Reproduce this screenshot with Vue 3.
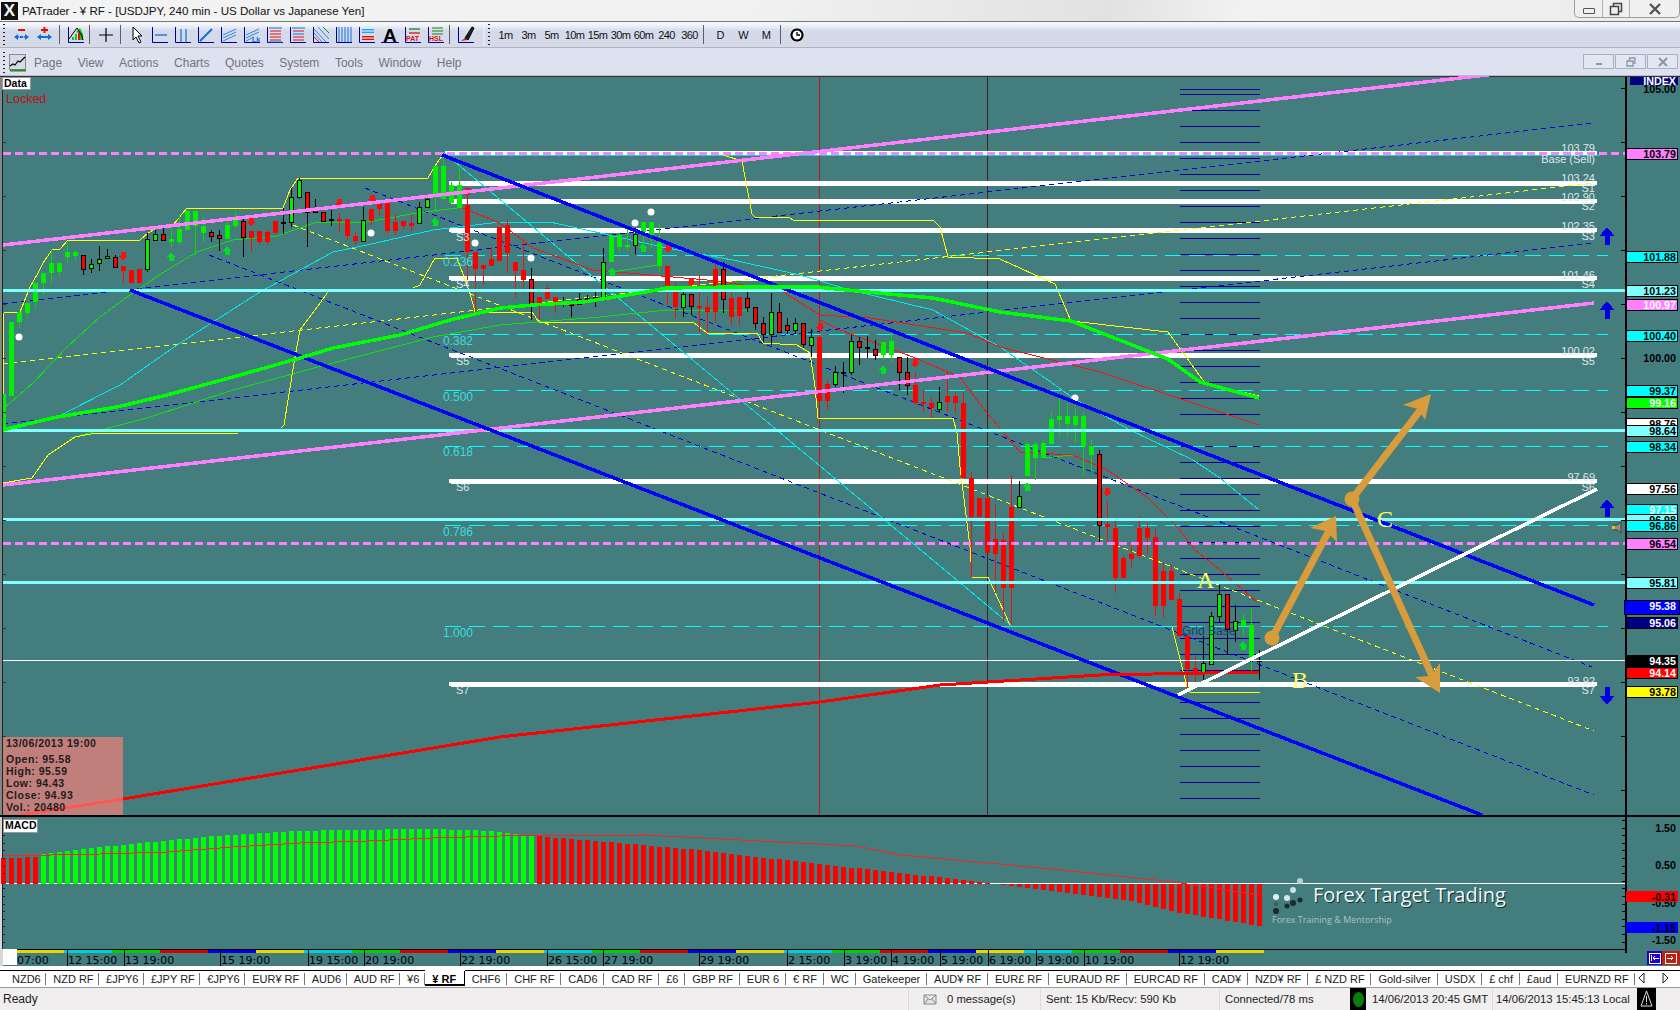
<template>
  <div class="app">
    <div class="titlebar">
      <span class="logo">X</span>
      <span class="title">PATrader - ¥ RF - [USDJPY, 240 min - US Dollar vs Japanese Yen]</span>
      <div class="winbtns">
        <button class="wb wb-min"><i class="min-glyph"></i></button>
        <button class="wb wb-res">
          <svg width="14" height="14" viewBox="0 0 14 14"><path d="M1.5 4.5h8v8h-8zM4.5 4.5v-3h8v8h-3" fill="none" stroke="#444" stroke-width="1.5" /></svg>
        </button>
        <button class="wb wb-close">
          <svg width="14" height="12" viewBox="0 0 14 12"><path d="M2 1l10 10M12 1L2 11" stroke="#555" stroke-width="2.4" /></svg>
        </button>
      </div>
    </div>

    <div class="toolbar">
      <i class="grip"></i>
      <template v-for="(t, i) in tools" :key="i">
        <i v-if="t.sep" class="sep"></i>
        <i v-else-if="t.grip" class="grip grip-mid"></i>
        <span v-else-if="t.text" class="tf">{{ t.text }}</span>
        <span v-else class="tool">
          <svg width="20" height="20" viewBox="0 0 20 20">
            <path v-if="t.frame" d="M2.5 2v15.5H18" fill="none" stroke="#000090" />
            <path v-for="(p, j) in t.paths" :key="j" :d="p[0]" :stroke="p[1] || 'none'" :fill="p[2] || 'none'" :stroke-width="p[3] || 1" />
            <text v-if="t.label" :x="t.lx" :y="t.ly" :fill="t.lc" :font-size="t.ls" :font-weight="t.lw" class="tool-label">{{ t.label }}</text>
          </svg>
        </span>
      </template>
    </div>

    <div class="menubar">
      <i class="grip"></i>
      <svg class="menu-icon" width="18" height="18" viewBox="0 0 18 18">
        <rect x="0.5" y="0.5" width="16" height="15" fill="#d8dbe6" stroke="#8a8a8a" />
        <path d="M1 16.5h16" stroke="#2a8a2a" stroke-width="2" />
        <path d="M1 12l3-2 2 1 3-4 2 1 5-5" fill="none" stroke="#000" stroke-width="1.2" />
      </svg>
      <span v-for="m in menus" :key="m" class="menu-item">{{ m }}</span>
      <div class="childbtns">
        <button class="cb"><i class="cb-min"></i></button>
        <button class="cb">
          <svg width="10" height="10" viewBox="0 0 10 10"><path d="M1 4h6v5H1zM3.500 4V1h5.500v5H7" fill="none" stroke="#8a96a8" stroke-width="1.300" /></svg>
        </button>
        <button class="cb">
          <svg width="10" height="10" viewBox="0 0 10 10"><path d="M1 1l8 8M9 1L1 9" stroke="#8a96a8" stroke-width="2" /></svg>
        </button>
      </div>
    </div>

    <!-- main price pane, drawn in page coordinates -->
    <svg class="pane" width="1680" height="741" viewBox="0 76 1680 741" shape-rendering="crispEdges">
      <rect x="0" y="76" width="1680" height="741" fill="#437d7d" />
      <rect x="0" y="76" width="2" height="741" fill="#7d8a8a" />
      <path d="M0 76.500H1680" stroke="#333" />

      <line x1="819.500" y1="77" x2="819.500" y2="815" stroke="#c01818" />
      <line x1="987.500" y1="77" x2="987.500" y2="815" stroke="#4a1c1c" />

      <!-- grid block -->
      <line v-for="g in gridYs" :key="g" x1="1180" :y1="g" x2="1260" :y2="g" stroke="#000090" />

      <line v-for="y in whiteYs" :key="y" x1="451" :y1="y" x2="1595" :y2="y" stroke="#fff" stroke-width="5" stroke-linecap="round" />
      <line x1="445" y1="155.500" x2="1600" y2="155.500" stroke="#00e0e0" />
      <line x1="445" y1="153" x2="1597" y2="153" stroke="#fff" stroke-width="4" />
      <line v-for="y in fibYs" :key="y" x1="445" :y1="y" x2="1608" :y2="y" stroke="#00ffff" stroke-dasharray="16 8" />

      <polyline v-for="(l, i) in thinLines" :key="'t' + i" :points="l.p" fill="none" :stroke="l.c" :stroke-width="l.w || 1" :stroke-dasharray="l.d" />

      <!-- candles -->
      <rect x="3" y="394" width="3" height="36" fill="#00f000" />
      <g v-for="c in candles" :key="c.x">
        <line :x1="c.x + 0.500" :y1="c.wt" :x2="c.x + 0.500" :y2="c.wb" :stroke="c.wick" />
        <rect :x="c.x - 2" :y="c.bt" :width="c.dark ? 4 : 5" :height="c.h" :fill="c.fill" :stroke="c.dark ? '#000' : 'none'" />
      </g>
      <path v-for="(a, i) in markers" :key="'m' + i" :d="a.d" :fill="a.c" />
      <circle v-for="(d, i) in dots" :key="'d' + i" :cx="d[0]" :cy="d[1]" r="3.500" fill="#fff" shape-rendering="auto" />

      <!-- levels over the candles -->
      <line v-for="y in paleYs" :key="y" x1="3" :y1="y" x2="1625" :y2="y" stroke="#80ffff" stroke-width="3" />
      <line x1="3" y1="660.500" x2="1625" y2="660.500" stroke="#fff" />
      <line x1="3" y1="153" x2="1625" y2="153" stroke="#ff80ff" stroke-width="3" stroke-dasharray="8 4" />
      <line x1="3" y1="543" x2="1625" y2="543" stroke="#ff80ff" stroke-width="3" stroke-dasharray="8 4" />
      <polyline v-for="(l, i) in thickLines" :key="'k' + i" :points="l.p" fill="none" :stroke="l.c" :stroke-width="l.w" />

      <!-- hand drawn forecast -->
      <line x1="1178" y1="695" x2="1597" y2="489" stroke="#fff" stroke-width="3.500" />
      <g shape-rendering="auto">
        <line x1="1272" y1="638" x2="1332" y2="525" stroke="#d99c3c" stroke-width="7" />
        <line x1="1352" y1="499" x2="1425" y2="404" stroke="#d99c3c" stroke-width="7" />
        <line x1="1352" y1="499" x2="1433" y2="678" stroke="#d99c3c" stroke-width="7" />
        <circle cx="1272" cy="638" r="7.500" fill="#d99c3c" />
        <circle cx="1352" cy="499" r="7.500" fill="#d99c3c" />
        <polygon points="1336,516 1337,542 1326,531 1310,528" fill="#d99c3c" />
        <polygon points="1431,394 1425,420 1418,409 1403,405" fill="#d99c3c" />
        <polygon points="1440,693 1415,677 1431,676 1440,663" fill="#d99c3c" />
      </g>
      <text x="1197" y="588" class="hand">A</text>
      <text x="1292" y="688" class="hand">B</text>
      <text x="1377" y="527" class="hand">C</text>
      <text x="1182" y="635" class="grid-base">Grid Base</text>

      <!-- level captions -->
      <text v-for="(l, i) in levelLabels" :key="'l' + i" :x="l[0]" :y="l[1]" :text-anchor="l[3] || 'end'" class="level">{{ l[2] }}</text>
      <text v-for="f in fibLabels" :key="f[0]" x="443" :y="f[1]" class="fib">{{ f[0] }}</text>

      <path v-for="(a, i) in bigArrows" :key="'b' + i" :d="a" fill="#0000e6" />
      <path d="M1614 525h3l4-3v11l-4-3h-3z" fill="#8c8c78" stroke="#333" stroke-width="0.800" shape-rendering="auto" />
      <path d="M1612 526h3v3h-3z" fill="#e8c820" />

      <!-- price axis -->
      <rect x="1625" y="77" width="1.500" height="740" fill="#000" />
      <line v-for="y in axisTicks" :key="y" x1="1621" :y1="y + 0.500" x2="1625" :y2="y + 0.500" stroke="#000" />
      <line v-for="y in axisTicks" :key="'a' + y" x1="3" :y1="y + 0.500" x2="6" :y2="y + 0.500" stroke="#333" />
      <rect x="2" y="77" width="1" height="740" fill="#222" />
      <text x="1676" y="93" class="tag" fill="#000">105.00</text>
      <rect x="1630" y="77" width="48" height="8" fill="#000080" />
      <text x="1676" y="84.500" class="tag" fill="#fff">INDEX</text>
      <text x="1676" y="362" class="tag" fill="#000">100.00</text>
      <g v-for="t in tags" :key="t.l">
        <rect :x="t.x || 1626" :y="t.y - 5.500" :width="t.w || 51" :height="t.h || 11" :fill="t.bg" stroke="#000" />
        <text x="1676" :y="t.y + 4" class="tag" :fill="t.fg">{{ t.l }}</text>
      </g>

      <!-- caption boxes -->
      <rect x="2" y="77" width="28" height="12" fill="#fff" stroke="#9a9a9a" />
      <text x="4" y="87" class="cap">Data</text>
      <text x="6" y="103" class="locked">Locked</text>
      <rect x="3" y="737" width="120" height="78" fill="#ff807c" fill-opacity="0.670" />
      <text x="6" y="747" class="info">13/06/2013 19:00</text>
      <text v-for="(t, i) in infoLines" :key="t" x="6" :y="763 + i * 12" class="info">{{ t }}</text>
      <rect x="0" y="815" width="1680" height="2" fill="#000" />
    </svg>

    <!-- MACD pane -->
    <svg class="pane" width="1680" height="132" viewBox="0 817 1680 132" shape-rendering="crispEdges">
      <rect x="0" y="817" width="1680" height="132" fill="#437d7d" />
      <rect x="0" y="817" width="2" height="132" fill="#d8d8d8" />
      <rect x="2" y="817" width="1" height="132" fill="#222" />
      <line x1="3" y1="883.500" x2="1625" y2="883.500" stroke="#fff" />
      <rect v-for="b in macdBars" :key="b.x" :x="b.x - 2" :y="b.y" width="5" :height="b.h" :fill="b.c" />
      <polyline :points="macdSignal" fill="none" stroke="#ff2020" />
      <line v-for="y in macdTicks" :key="y" x1="1622" :y1="y + 0.500" x2="1625" :y2="y + 0.500" stroke="#000" />
      <line v-for="y in macdTicks" :key="'l' + y" x1="3" :y1="y + 0.500" x2="5" :y2="y + 0.500" stroke="#222" />
      <rect x="1625" y="817" width="1.500" height="132" fill="#000" />
      <rect x="3" y="819" width="34" height="13" fill="#fff" stroke="#9a9a9a" />
      <text x="5" y="829" class="cap">MACD</text>

      <g shape-rendering="auto">
        <circle v-for="(w, i) in bubbles" :key="i" :cx="w[0]" :cy="w[1]" :r="w[2]" :fill="w[3]" />
      </g>
      <text x="1314" y="903" class="mark mark-shadow">Forex Target Trading</text>
      <text x="1313" y="902" class="mark">Forex Target Trading</text>
      <text x="1272" y="923" class="mark-sub">Forex Training &amp; Mentorship</text>

      <text x="1676" y="832" class="tag" fill="#000">1.50</text>
      <text x="1676" y="869" class="tag" fill="#000">0.50</text>
      <text x="1676" y="907" class="tag" fill="#000">-0.50</text>
      <text x="1676" y="944" class="tag" fill="#000">-1.50</text>
      <rect x="1626" y="891" width="52" height="11" fill="#ff0000" />
      <text x="1676" y="901" class="tag" fill="#000">-0.31</text>
      <rect x="1626" y="922" width="52" height="11" fill="#0000ff" />
      <text x="1676" y="932" class="tag" fill="#000">-1.15</text>
    </svg>

    <!-- time axis -->
    <svg class="pane" width="1680" height="17" viewBox="0 949 1680 17" shape-rendering="crispEdges">
      <rect x="0" y="949" width="1680" height="17" fill="#437d7d" />
      <rect x="0" y="949" width="3" height="17" fill="#d8d8d8" />
      <rect v-for="s in strip" :key="s.x" :x="s.x" y="950" :width="s.w" height="3" :fill="s.c" />
      <rect x="16" y="949" width="1610" height="1" fill="#000" />
      <rect x="1625" y="949" width="1.500" height="4" fill="#000" />
      <rect x="3" y="947" width="14" height="18" fill="#fff" />
      <g v-for="t in times" :key="t[1]">
        <line v-if="t[0] > 20" :x1="t[0] + 0.500" y1="950" :x2="t[0] + 0.500" y2="966" stroke="#000" />
        <text :x="t[0] + 1" y="964" class="time">{{ t[1] }}</text>
      </g>
      <rect x="1647" y="951" width="15" height="14" fill="#2200cc" />
      <rect x="1662" y="951" width="18" height="14" fill="#c02010" />
      <rect x="1649" y="953" width="11" height="10" fill="none" stroke="#fff" />
      <rect x="1665" y="953" width="11" height="10" fill="none" stroke="#fff" />
      <path d="M1651.500 955v6M1659 958h-6m2-2-2 2 2 2M1667 958h6m-2-2 2 2-2 2" fill="none" stroke="#fff" />
    </svg>

    <div class="tabs">
      <div class="tab-row">
        <span v-for="t in tabs" :key="t" class="tab" :class="{ active: t === '¥ RF' }">{{ t }}</span>
      </div>
      <div class="tab-nav">
        <svg width="34" height="14" viewBox="0 0 34 14"><path d="M7 2L2 7l5 5zM26 2l5 5-5 5z" fill="none" stroke="#222" /></svg>
      </div>
    </div>

    <div class="status">
      <span class="st st-ready">Ready</span>
      <span class="st st-msg">
        <svg width="14" height="13" viewBox="0 0 14 13"><path d="M1 2h12v9H1zM1 2l6 5 6-5M1 11l4-5M13 11L9 6" fill="#e4e4e4" stroke="#888" /></svg>
        <span>0 message(s)</span>
      </span>
      <span class="st st-sent">Sent: 15 Kb/Recv: 590 Kb</span>
      <span class="st st-conn">Connected/78 ms</span>
      <span class="st-led"><i></i></span>
      <span class="st st-gmt">14/06/2013 20:45 GMT</span>
      <span class="st st-local">14/06/2013 15:45:13 Local</span>
      <span class="st-warn">
        <svg width="15" height="20" viewBox="0 0 15 20"><path d="M7.500 2L13 17H2z" fill="none" stroke="#ddd" /><path d="M7.500 7v6M7.500 14v1.500" stroke="#ddd" /></svg>
      </span>
    </div>
  </div>
</template>

<script setup>
const menus = ['Page', 'View', 'Actions', 'Charts', 'Quotes', 'System', 'Tools', 'Window', 'Help']

const navy = '#000090'
const blue = '#0a6fe0'
const red = '#e01010'
const green = '#108a10'

const tools = [
  { paths: [['M6 4h7v2H6z', null, red], ['M2 12l4-3v2l2 1-2 1v2zM17 12l-4-3v2l-2 1 2 1v2z', null, blue], ['M8 11h3v2H8z', null, blue]] },
  { paths: [['M6 4h7v2H6zM8.500 2h2v6h-2z', null, red], ['M2 12l4-3v6zM17 12l-4-3v6zM6 11h7v2H6z', null, blue]] },
  { sep: true },
  { frame: true, paths: [['M10 7l4-4 3 6v6h-3V9zM6 15v-3h2v3zM9 15v-6h2v6z', null, '#18c018'], ['M12 15V8h2v7z', null, red], ['M3 14l5-7 3-4 5 8 1 4', '#000', null, 1]] },
  { sep: true },
  { paths: [['M10 3v14M3 10h14', '#000', null, 1.200]] },
  { sep: true },
  { paths: [['M6 2v13l3-3 3 6 2-1-3-6h4z', '#000', '#fff']] },
  { frame: true, paths: [['M5 10h12', blue, null, 1.300]] },
  { frame: true, paths: [['M8 4v13M13 4v13', blue, null, 1.200]] },
  { frame: true, paths: [['M4 16L16 4', blue, null, 2]] },
  { frame: true, paths: [['M4 10l13-6M4 16l13-6M4 13l13-6', blue, null, 0.800]] },
  { frame: true, paths: [['M4 10l13-6M4 13l13-6M4 16l8-4', blue, null, 0.800]], label: 'Lk', lx: 10, ly: 17, lc: blue, ls: 7, lw: 700 },
  { frame: true, paths: [['M4 3h13M4 17h13', blue], ['M5 6h11M5 9h11M5 12h11M5 15h11', red]] },
  { frame: true, paths: [['M4 3h13', blue], ['M5 6h11', red], ['M5 9h11', blue], ['M5 12h11', red], ['M5 15h11', red]] },
  { frame: true, paths: [['M3 8l8 9M3 4l12 13M7 2l11 12', blue, null, 0.800], ['M3 12l5 5', red], ['M12 2l6 6', green]] },
  { frame: true, paths: [['M5 2v15M8 2v15M11 2v15M14 2v15M17 2v15', blue]] },
  { frame: true, paths: [['M5 4h12v4H5z', null, '#20a0ff'], ['M5 11h12v4H5z', null, red], ['M5 6h12M5 13h12', '#fff', null, 1]] },
  { paths: [['M1 17.500h18', navy]], label: 'A', lx: 3, ly: 17, lc: '#000', ls: 19, lw: 700 },
  { frame: true, paths: [['M6 4h11', green, null, 1.300], ['M6 8h11', red, null, 1.300]], label: 'PAT', lx: 3, ly: 16, lc: red, ls: 7, lw: 700 },
  { frame: true, paths: [['M6 3h11M6 6h11M6 9h11', green]], label: 'HSL', lx: 3, ly: 16, lc: red, ls: 7, lw: 700 },
  { sep: true },
  { frame: true, paths: [['M9 13l7-11 2 1-6 12z', '#000', '#222'], ['M5 16l4-3 2 2z', null, red]] },
  { grip: true },
  ...['1m', '3m', '5m', '10m', '15m', '30m', '60m', '240', '360'].map(text => ({ text })),
  { sep: true },
  { text: 'D' }, { text: 'W' }, { text: 'M' },
  { sep: true },
  { paths: [['M10 4.500a5.500 5.500 0 1 0 .01 0z', '#000', '#fff', 2], ['M10 7v3h3', '#000', null, 1.300]] }
]

// page y of each horizontal study
const whiteYs = [183, 201, 230, 278, 355, 481, 684]
const fibYs = [255, 334, 390, 446, 525, 626]
const paleYs = [290, 430, 519, 582]
const gridYs = [89]
for (let y = 94; y <= 798; y += 16) gridYs.push(y)
const axisTicks = []
for (let y = 88; y < 815; y += 54) axisTicks.push(y)

const pts = a => a.map(p => p.join(',')).join(' ')

const thinLines = [
  // channel studies
  { p: '3,304 1594,123', c: '#0000e0', d: '5 4' },
  { p: '3,424 1594,243', c: '#0000e0', d: '5 4' },
  { p: '3,364 1594,183', c: '#ffff00', d: '5 4' },
  { p: '365,188 1592,667', c: '#0000e0', d: '5 4' },
  { p: '209,255 1594,795', c: '#0000e0', d: '5 4' },
  { p: '293,225 1594,731', c: '#ffff00', d: '5 4' },
  // cyan
  { p: '443,152 1012,626', c: '#00e8e8' },
  { p: pts([[3, 432], [57, 417], [120, 385], [177, 345], [260, 292], [333, 252], [367, 245], [433, 230], [500, 222], [550, 222], [600, 233], [667, 248], [733, 260], [800, 275], [850, 290], [933, 310], [1000, 347], [1048, 380], [1073, 398], [1130, 430], [1193, 460], [1220, 478], [1259, 510]]), c: '#00e8e8' },
  // green envelopes
  { p: pts([[3, 409], [33, 383], [67, 347], [100, 317], [127, 297], [167, 270], [197, 252], [233, 240], [277, 236], [317, 222], [367, 222], [417, 213], [457, 208]]), c: '#10e010' },
  { p: pts([[70, 438], [147, 418], [233, 390], [333, 363], [433, 337], [500, 325], [600, 317], [667, 310], [747, 311]]), c: '#10e010' },
  { p: '612,272 657,265', c: '#10e010' },
  { p: '1043,458 1073,455', c: '#10e010' },
  // red envelopes
  { p: pts([[460, 207], [500, 223], [533, 248], [593, 270], [707, 280], [780, 290], [820, 315], [870, 318], [967, 333], [1000, 347], [1100, 372], [1175, 397], [1259, 425]]), c: '#ff1010' },
  { p: pts([[820, 320], [840, 330], [913, 357], [960, 377], [987, 413], [1020, 452], [1073, 455], [1107, 470], [1147, 497], [1180, 530], [1195, 550], [1220, 570], [1258, 603]]), c: '#ff1010' },
  // yellow stops
  { p: pts([[3, 420], [4, 313], [20, 312], [30, 287], [38, 273], [43, 263], [52, 250], [60, 249], [68, 240], [140, 240], [148, 233], [157, 228], [173, 225], [187, 208], [283, 208], [290, 190], [298, 178], [428, 178], [437, 163], [443, 155]]), c: '#ffff00' },
  { p: pts([[723, 155], [742, 161], [752, 214], [755, 217], [790, 218], [793, 220], [933, 220], [940, 227], [948, 257], [1000, 259], [1055, 284], [1071, 321], [1168, 332], [1205, 383], [1259, 396]]), c: '#ffff00' },
  { p: pts([[3, 483], [32, 478], [48, 455], [75, 437], [96, 433], [238, 433]]), c: '#ffff00' },
  { p: pts([[281, 428], [284, 425], [295, 357], [300, 330], [315, 310], [328, 292]]), c: '#ffff00' },
  { p: pts([[413, 288], [420, 285], [435, 258], [457, 258], [470, 293], [475, 312], [532, 312], [539, 322], [693, 322], [707, 333], [757, 333], [763, 343], [797, 345], [810, 353], [815, 387], [818, 418], [953, 418], [957, 433], [960, 467], [970, 547], [972, 577], [988, 577], [1010, 625]]), c: '#ffff00' },
  { p: '1172,627 1187,687 1190,692 1260,692', c: '#ffff00' },
  { p: '1010,626 1172,626', c: '#00ffff' }
]

const thickLines = [
  { p: '3,245 1495,74', c: '#ff80ff', w: 3.500 },
  { p: '3,485 1594,303', c: '#ff80ff', w: 3.500 },
  { p: '442,155 1594,605', c: '#0000ff', w: 3.500 },
  { p: '130,290 1482,815', c: '#0000ff', w: 3.500 },
  { p: pts([[3, 430], [10, 428], [57, 417], [117, 407], [167, 395], [233, 377], [300, 358], [333, 348], [400, 335], [450, 320], [500, 308], [533, 305], [583, 302], [640, 293], [667, 288], [733, 287], [817, 287], [867, 292], [933, 298], [1000, 312], [1071, 321], [1168, 359], [1200, 382], [1259, 398]]), c: '#00ff00', w: 3.500 },
  { p: pts([[20, 815], [123, 799], [500, 737], [820, 702], [940, 685], [1100, 675], [1259, 672]]), c: '#ff0000', w: 3 }
]

// [body top, body bottom, wick top, wick bottom, kind]; g/r plain, G/R outlined, k black doji
const rawCandles = [
  [322, 396, 322, 396, 'g'], [312, 322, 312, 328, 'g'], [303, 313, 303, 317, 'g'], [283, 302, 283, 309, 'g'],
  [273, 283, 273, 295, 'g'], [263, 273, 250, 283, 'g'], [263, 272, 263, 276, 'g'], [252, 257, 242, 263, 'g'],
  [252, 256, 250, 260, 'g'], [255, 269, 255, 275, 'R'], [264, 268, 259, 273, 'G'], [259, 263, 246, 271, 'G'],
  [256, 258, 249, 258, 'G'], [257, 267, 255, 268, 'R'], [266, 271, 266, 283, 'r'], [270, 283, 270, 283, 'r'],
  [269, 283, 269, 283, 'r'], [239, 269, 233, 272, 'G'], [234, 240, 230, 240, 'G'], [234, 240, 225, 240, 'R'],
  [239, 242, 225, 247, 'g'], [229, 242, 215, 245, 'g'], [211, 230, 211, 230, 'g'], [211, 226, 211, 255, 'g'],
  [226, 233, 217, 242, 'g'], [232, 236, 230, 242, 'R'], [235, 238, 230, 251, 'R'], [225, 239, 222, 239, 'g'],
  [220, 226, 211, 228, 'g'], [221, 237, 217, 257, 'R'], [231, 238, 231, 252, 'r'], [231, 242, 231, 245, 'r'],
  [232, 242, 230, 245, 'r'], [221, 233, 221, 233, 'r'], [222, 223, 208, 234, 'k'], [197, 222, 188, 227, 'G'],
  [180, 197, 178, 199, 'G'], [192, 212, 192, 247, 'R'], [210, 212, 199, 213, 'R'], [212, 221, 212, 221, 'R'],
  [219, 220, 210, 226, 'k'], [219, 221, 213, 232, 'r'], [219, 236, 219, 240, 'r'], [236, 241, 232, 245, 'r'],
  [220, 241, 207, 241, 'G'], [209, 221, 209, 225, 'r'], [204, 209, 204, 216, 'r'], [203, 231, 203, 233, 'r'],
  [222, 231, 214, 235, 'r'], [221, 226, 221, 229, 'r'], [223, 226, 214, 231, 'r'], [207, 223, 202, 224, 'G'],
  [199, 207, 196, 207, 'G'], [166, 194, 166, 212, 'g'], [166, 199, 155, 199, 'g'], [185, 203, 182, 203, 'g'],
  [185, 208, 164, 208, 'g'], [205, 252, 188, 280, 'r'], [252, 269, 252, 312, 'r'], [265, 269, 265, 285, 'r'],
  [259, 266, 247, 266, 'r'], [227, 261, 227, 261, 'r'], [225, 253, 220, 273, 'r'], [262, 271, 262, 298, 'r'],
  [270, 280, 242, 293, 'r'], [279, 304, 268, 320, 'R'], [297, 304, 297, 320, 'r'], [288, 299, 285, 299, 'r'],
  [297, 303, 297, 313, 'r'], [302, 303, 297, 307, 'k'], [302, 305, 302, 317, 'R'], [299, 304, 293, 305, 'G'],
  [298, 300, 295, 300, 'R'], [297, 299, 292, 307, 'G'], [262, 297, 248, 297, 'G'], [236, 262, 234, 262, 'g'],
  [235, 247, 233, 252, 'g'], [245, 247, 228, 250, 'g'], [234, 245, 228, 254, 'G'], [222, 232, 222, 248, 'g'],
  [222, 235, 222, 248, 'g'], [242, 266, 223, 272, 'g'], [266, 289, 266, 305, 'r'], [288, 307, 282, 318, 'r'],
  [294, 307, 292, 317, 'G'], [294, 306, 294, 315, 'R'], [306, 307, 275, 332, 'r'], [307, 312, 297, 332, 'r'],
  [269, 312, 263, 323, 'r'], [269, 299, 262, 313, 'R'], [298, 317, 285, 325, 'r'], [297, 316, 297, 325, 'r'],
  [298, 307, 288, 312, 'R'], [307, 323, 307, 330, 'R'], [323, 334, 317, 342, 'R'], [312, 334, 293, 345, 'G'],
  [312, 332, 303, 332, 'R'], [325, 330, 318, 334, 'R'], [323, 330, 318, 334, 'G'], [323, 344, 323, 348, 'R'],
  [337, 345, 329, 357, 'G'], [337, 401, 337, 401, 'r'], [384, 401, 380, 410, 'r'], [372, 384, 366, 387, 'G'],
  [372, 373, 362, 393, 'k'], [341, 372, 335, 375, 'G'], [341, 347, 337, 365, 'R'], [347, 348, 336, 358, 'k'],
  [349, 355, 340, 360, 'R'], [342, 355, 342, 360, 'g'], [341, 355, 333, 362, 'g'], [357, 372, 357, 390, 'R'],
  [372, 385, 357, 395, 'R'], [385, 403, 372, 405, 'r'], [402, 403, 391, 412, 'r'], [403, 408, 397, 418, 'r'],
  [402, 409, 387, 412, 'G'], [396, 402, 372, 412, 'r'], [396, 403, 392, 413, 'r'], [403, 478, 392, 478, 'r'],
  [478, 517, 472, 577, 'r'], [498, 517, 498, 517, 'r'], [498, 553, 497, 553, 'r'], [539, 554, 504, 593, 'r'],
  [540, 588, 533, 622, 'r'], [507, 588, 475, 625, 'r'], [496, 507, 481, 508, 'G'], [444, 476, 442, 476, 'g'],
  [444, 458, 442, 480, 'g'], [443, 458, 440, 458, 'g'], [419, 444, 412, 444, 'g'], [416, 420, 398, 437, 'g'],
  [416, 424, 403, 437, 'g'], [416, 425, 408, 443, 'g'], [416, 446, 412, 475, 'g'], [446, 455, 439, 472, 'g'],
  [454, 525, 450, 545, 'R'], [524, 527, 501, 543, 'r'], [528, 578, 518, 593, 'r'], [558, 578, 555, 578, 'r'],
  [554, 559, 543, 567, 'r'], [528, 556, 516, 558, 'r'], [528, 538, 523, 555, 'r'], [537, 606, 529, 616, 'r'],
  [571, 606, 563, 618, 'r'], [571, 600, 565, 600, 'r'], [599, 636, 593, 637, 'r'], [636, 669, 635, 688, 'r'],
  [668, 673, 656, 682, 'r'], [663, 672, 636, 682, 'G'], [616, 664, 612, 665, 'G'], [594, 616, 585, 622, 'G'],
  [594, 629, 594, 655, 'R'], [621, 630, 605, 642, 'G'], [620, 626, 614, 636, 'g'], [625, 660, 608, 673, 'g'],
  [660, 661, 650, 680, 'k']
]

const kinds = {
  g: { fill: '#00f000', wick: '#00e000' },
  G: { fill: '#00f000', wick: '#000', dark: true },
  r: { fill: '#ff0000', wick: '#f01010' },
  R: { fill: '#ff0000', wick: '#000', dark: true },
  k: { fill: '#000', wick: '#000' }
}

const candles = rawCandles.map((c, i) => ({
  x: Math.round(11.300 + 8 * i),
  bt: c[0],
  h: Math.max(c[1] - c[0], 2),
  wt: c[2],
  wb: c[3],
  ...kinds[c[4]]
}))

const upArrow = (x, y) => `M${x} ${y - 5}l4.500 5h-2v4h-5v-4h-2z`
const downArrow = (x, y) => `M${x} ${y + 5}l4.500-5h-2v-4h-5v4h-2z`
const bigUp = (x, y) => `M${x} ${y - 9}l7.500 9h-5v9h-5v-9h-5z`
const bigDown = (x, y) => `M${x} ${y + 9}l7.500-9h-5v-9h-5v9h-5z`

const markers = [
  ...[[171, 257], [227, 251], [435, 222], [612, 272], [643, 248], [883, 370], [1027, 487], [1243, 646]].map(p => ({ d: upArrow(p[0], p[1]), c: '#00e020' })),
  ...[[123, 256], [251, 222], [339, 203], [372, 199], [467, 192], [668, 248], [691, 282], [820, 327], [915, 363], [1107, 492]].map(p => ({ d: downArrow(p[0], p[1]), c: '#ff1010' }))
]
const dots = [[19, 337], [371, 233], [475, 243], [531, 258], [635, 223], [651, 212], [1075, 398]]

const bigArrows = [bigUp(1607, 236), bigUp(1607, 310), bigUp(1607, 508), bigDown(1607, 696)]

const levelLabels = [
  [1595, 152, '103.79'], [1595, 163, 'Base (Sell)'],
  [1595, 182, '103.24'], [1595, 192, 'S1'],
  [1595, 201, '102.90'], [1595, 210, 'S2'],
  [1595, 230, '102.35'], [1595, 240, 'S3'],
  [1595, 279, '101.46'], [1595, 288, 'S4'],
  [1595, 355, '100.02'], [1595, 365, 'S5'],
  [1595, 481, '97.69'], [1595, 491, 'S6'],
  [1595, 685, '93.92'], [1595, 694, 'S7'],
  [456, 241, 'S3', 'start'], [456, 288, 'S4', 'start'], [456, 365, 'S5', 'start'], [456, 491, 'S6', 'start'], [456, 694, 'S7', 'start']
]
const fibLabels = [['0.236', 266], ['0.382', 345], ['0.500', 401], ['0.618', 456], ['0.786', 536], ['1.000', 637]]

const tags = [
  { y: 154, l: '103.79', bg: '#ff80ff', fg: '#000' },
  { y: 257, l: '101.88', bg: '#00ffff', fg: '#000' },
  { y: 291, l: '101.23', bg: '#80ffff', fg: '#000' },
  { y: 305, l: '100.97', bg: '#ff80ff', fg: '#fff' },
  { y: 336, l: '100.40', bg: '#00ffff', fg: '#000' },
  { y: 391, l: '99.37', bg: '#00ffff', fg: '#000' },
  { y: 403, l: '99.16', bg: '#00ff00', fg: '#fff' },
  { y: 424, l: '98.76', bg: '#fff', fg: '#000' },
  { y: 431, l: '98.64', bg: '#80ffff', fg: '#000' },
  { y: 447, l: '98.34', bg: '#00ffff', fg: '#000' },
  { y: 489, l: '97.56', bg: '#fff', fg: '#000' },
  { y: 510, l: '97.15', bg: '#00ffff', fg: '#fff' },
  { y: 520, l: '96.98', bg: '#80ffff', fg: '#000' },
  { y: 526, l: '96.86', bg: '#00ffff', fg: '#000' },
  { y: 544, l: '96.54', bg: '#ff80ff', fg: '#000' },
  { y: 583, l: '95.81', bg: '#80ffff', fg: '#000' },
  { y: 606, l: '95.38', bg: '#0000ff', fg: '#fff', x: 1624, w: 55, h: 14 },
  { y: 623, l: '95.06', bg: '#000080', fg: '#fff' },
  { y: 661, l: '94.35', bg: '#000', fg: '#fff' },
  { y: 673, l: '94.14', bg: '#ff0000', fg: '#fff' },
  { y: 692, l: '93.78', bg: '#ffff00', fg: '#000' }
]

const infoLines = ['Open: 95.58', 'High: 95.59', 'Low: 94.43', 'Close: 94.93', 'Vol.: 20480']

// MACD histogram edge against x, read off the pane
const macdEdge = [[3, 858], [35, 857], [43, 854], [65, 851], [100, 847], [130, 844], [163, 841], [203, 837], [259, 833], [300, 831], [333, 830], [433, 829], [467, 830], [500, 832], [536, 836], [700, 850], [800, 862], [900, 873], [990, 883], [1100, 897], [1137, 902], [1174, 912], [1211, 918], [1259, 926]]
const edgeAt = x => {
  for (let i = 1; i < macdEdge.length; i++) {
    const [x0, y0] = macdEdge[i - 1]
    const [x1, y1] = macdEdge[i]
    if (x <= x1) return y0 + (y1 - y0) * (x - x0) / (x1 - x0)
  }
  return 926
}
const macdBars = []
for (let i = -1; i < 157; i++) {
  const x = Math.round(11.300 + 8 * i)
  const e = Math.round(edgeAt(x))
  const top = Math.min(e, 884)
  const bot = Math.max(e, 884)
  const c = x > 39 && x < 536 ? '#00ff00' : '#ff0000'
  if (bot > top) macdBars.push({ x, y: top, h: bot - top, c })
}
const macdSignal = pts([[3, 856], [100, 854], [167, 852], [233, 847], [300, 843], [367, 841], [433, 838], [500, 836], [643, 835], [857, 846], [900, 855], [1000, 864], [1100, 874], [1174, 882], [1259, 895]])

const macdTicks = []
for (let y = 820; y < 948; y += 7.600) macdTicks.push(Math.round(y))

const bubbles = [
  [1276, 897, 3, '#dfeeee'], [1276, 911, 3, '#1c2a2a'], [1276, 904, 2, '#3a5a5a'],
  [1287, 898, 3, '#d8e8e8'], [1287, 906, 2.500, '#1c2a2a'],
  [1293, 890, 3, '#cfe0e0'], [1293, 903, 3, '#1c2a2a'],
  [1300, 881, 3, '#b8d0d0'], [1300, 900, 2.500, '#1c2a2a']
]

const stripColors = ['#e8d800', '#00d0d8', '#00d000', '#d80000', '#0000e0']
const strip = []
for (let x = 16, i = 0; x < 1264; x += 48, i++) {
  strip.push({ x, w: Math.min(48, 1264 - x), c: stripColors[i % 5] })
}

const times = [
  [16, '07:00'], [67, '12 15:00'], [124, '13 19:00'], [220, '15 19:00'], [308, '19 15:00'], [364, '20 19:00'], [460, '22 19:00'],
  [547, '26 15:00'], [603, '27 19:00'], [699, '29 19:00'], [787, '2 15:00'], [844, '3 19:00'], [891, '4 19:00'], [940, '5 19:00'],
  [988, '6 19:00'], [1036, '9 19:00'], [1084, '10 19:00'], [1179, '12 19:00']
]

const tabs = ['NZD6', 'NZD RF', '£JPY6', '£JPY RF', '€JPY6', 'EUR¥ RF', 'AUD6', 'AUD RF', '¥6', '¥ RF', 'CHF6', 'CHF RF', 'CAD6', 'CAD RF', '£6', 'GBP RF', 'EUR 6', '€ RF', 'WC', 'Gatekeeper', 'AUD¥ RF', 'EUR£ RF', 'EURAUD RF', 'EURCAD RF', 'CAD¥', 'NZD¥ RF', '£ NZD RF', 'Gold-silver', 'USDX', '£ chf', '£aud', 'EURNZD RF']
</script>

<style>
html, body { margin: 0; background: #f0eeee; overflow: hidden; }
</style>

<style scoped>
.app {
  width: 1680px;
  height: 1010px;
  display: flex;
  flex-direction: column;
  font-family: "Liberation Sans", Arial, sans-serif;
  overflow: hidden;
}
i { font-style: normal; display: block; }
button { padding: 0; margin: 0; background: none; }

.titlebar {
  height: 21px;
  box-sizing: border-box;
  display: flex;
  align-items: center;
  background: linear-gradient(100deg, #f3f3f3 0%, #f1f1f1 45%, #e2e2e2 66%, #f2f2f2 74%, #ececec 100%);
  color: #111;
}
.logo {
  width: 17px;
  height: 18px;
  margin: 0 4px 0 1px;
  background: #111;
  color: #f4f4f4;
  font: 700 17px/18px "Liberation Sans", sans-serif;
  text-align: center;
}
.title { font-size: 11.600px; flex: 1; }
.winbtns {
  align-self: flex-start;
  display: flex;
  height: 17px;
  border: 1px solid #9c9c9c;
  border-top: 0;
  border-radius: 0 0 5px 5px;
  margin-right: 0;
  background: #f0f0f0;
}
.wb { border: 0; display: flex; align-items: center; justify-content: center; height: 17px; }
.wb-min { width: 28px; border-right: 1px solid #b0b0b0; }
.wb-res { width: 27px; border-right: 1px solid #b0b0b0; }
.wb-close { width: 49px; }
.min-glyph { width: 10px; height: 4px; border: 1px solid #555; border-radius: 1px; margin-top: 4px; }

.toolbar {
  height: 27px;
  box-sizing: border-box;
  border-top: 1px solid #777;
  border-bottom: 1px solid #b4b4b8;
  display: flex;
  align-items: center;
  padding-left: 3px;
  background: linear-gradient(#f7f7fa 0, #f4f5f9 10%, #d5daeb 36%, #d5daeb 100%);
}
.grip {
  width: 2px;
  height: 22px;
  flex: none;
  margin-right: 5.500px;
  background: repeating-linear-gradient(#222 0 1.500px, transparent 1.500px 4px);
}
.grip-mid { margin: 0 4.500px 0 10px; box-shadow: -5px 0 0 -0.500px #f6f6fa; }
.sep {
  width: 1px;
  height: 19px;
  flex: none;
  margin: 0 4.500px 0 2px;
  background: #606060;
}
.tool {
  width: 23px;
  height: 22px;
  flex: none;
  display: flex;
  align-items: center;
  justify-content: center;
}
.tool-label { font-family: "Liberation Sans", sans-serif; }
.tf {
  width: 23px;
  flex: none;
  text-align: center;
  font-size: 11px;
  letter-spacing: -0.700px;
  color: #111;
}

.menubar {
  height: 28px;
  box-sizing: border-box;
  display: flex;
  align-items: center;
  padding: 2px 0 0 3px;
  background: #dde1f0;
  border-bottom: 1px solid #b8bcc8;
}
.menubar .grip { margin-right: 4px; }
.menu-icon { margin-right: 1.500px; }
.menu-item {
  font-size: 12px;
  color: #73737a;
  margin: 0 10px 0 5.600px;
}
.childbtns { margin-left: auto; display: flex; gap: 1px; margin-right: 2px; margin-top: -2px; }
.cb {
  width: 31px;
  height: 15px;
  display: flex;
  align-items: center;
  justify-content: center;
  background: #e2e6f2;
  border: 1px solid #a4b2c2;
}
.cb-min { width: 6px; height: 2px; margin-top: 4px; background: #8a96a8; }

.pane { display: block; flex: none; }
.hand { font: 24px "Liberation Serif", serif; fill: #ffff60; }
.grid-base { font: 12px "Liberation Sans", sans-serif; fill: #1a3c7c; }
.level { font: 11px "Liberation Sans", sans-serif; fill: #dfe8e8; }
.fib { font: 12px "Liberation Sans", sans-serif; fill: #40dcdc; }
.tag { font: 700 10.700px "Liberation Sans", sans-serif; text-anchor: end; }
.cap { font: 700 10.500px "Liberation Sans", sans-serif; fill: #000; }
.locked { font: 12.500px "Liberation Sans", sans-serif; fill: #c01010; }
.info { font: 700 10.500px "Liberation Sans", sans-serif; letter-spacing: 0.500px; fill: #1c1c1c; }
.mark { font: 400 20px "Open Sans", sans-serif; fill: #f0fcfc; }
.mark-shadow { fill: #182828; }
.mark-sub { font: 9px "Open Sans", sans-serif; fill: #a8c4c4; }
.time { font: 11px "DejaVu Sans", sans-serif; fill: #000; }

.tabs {
  height: 22px;
  box-sizing: border-box;
  padding-top: 4px;
  display: flex;
  background: #fff;
  border-bottom: 1px solid #9a9a9a;
}
.tab-row {
  display: flex;
  flex: 1;
  border-top: 1px solid #000;
  padding-left: 5px;
  height: 15px;
  align-items: center;
}
.tab {
  font-size: 11px;
  color: #222;
  padding: 0 5.800px 0 7px;
  line-height: 12px;
  border-right: 1px solid #777;
  white-space: nowrap;
}
.tab:nth-child(-n+9) { padding-right: 4.500px; }
.tab.active {
  font-weight: 700;
  color: #000;
  background: #fff;
  padding: 2px 7.500px 0;
  margin-top: -1px;
  height: 15px;
  box-sizing: border-box;
  border-right: 1px solid #000;
  border-bottom: 2px solid #000;
  box-shadow: 0 -2px 0 #fff;
}
.tab-nav { width: 43px; border-top: 1px solid #000; height: 15px; }

.status {
  height: 22px;
  display: flex;
  align-items: center;
  background: #f0eeee;
  font-size: 11.300px;
  color: #222;
  white-space: nowrap;
}
.st {
  height: 100%;
  display: flex;
  align-items: center;
  gap: 10px;
  box-sizing: border-box;
  border-left: 1px solid #dcdcdc;
  padding-left: 5px;
  flex: none;
}
.st-ready { width: 908px; border-left: 0; padding-left: 3px; font-size: 12px; }
.st-msg { width: 132px; padding-left: 14px; }
.st-sent { width: 179px; }
.st-conn { width: 131px; }
.st-led {
  width: 16px;
  height: 22px;
  flex: none;
  background: #000;
  display: flex;
  align-items: center;
  justify-content: center;
}
.st-led i { width: 11px; height: 15px; border-radius: 50%; background: #0a7d10; }
.st-gmt { width: 126px; padding-left: 6px; border-left: 0; }
.st-local { width: 145px; padding-left: 3px; }
.st-warn {
  width: 19px;
  height: 22px;
  flex: none;
  background: #000;
  display: flex;
  align-items: center;
  justify-content: center;
}
</style>
